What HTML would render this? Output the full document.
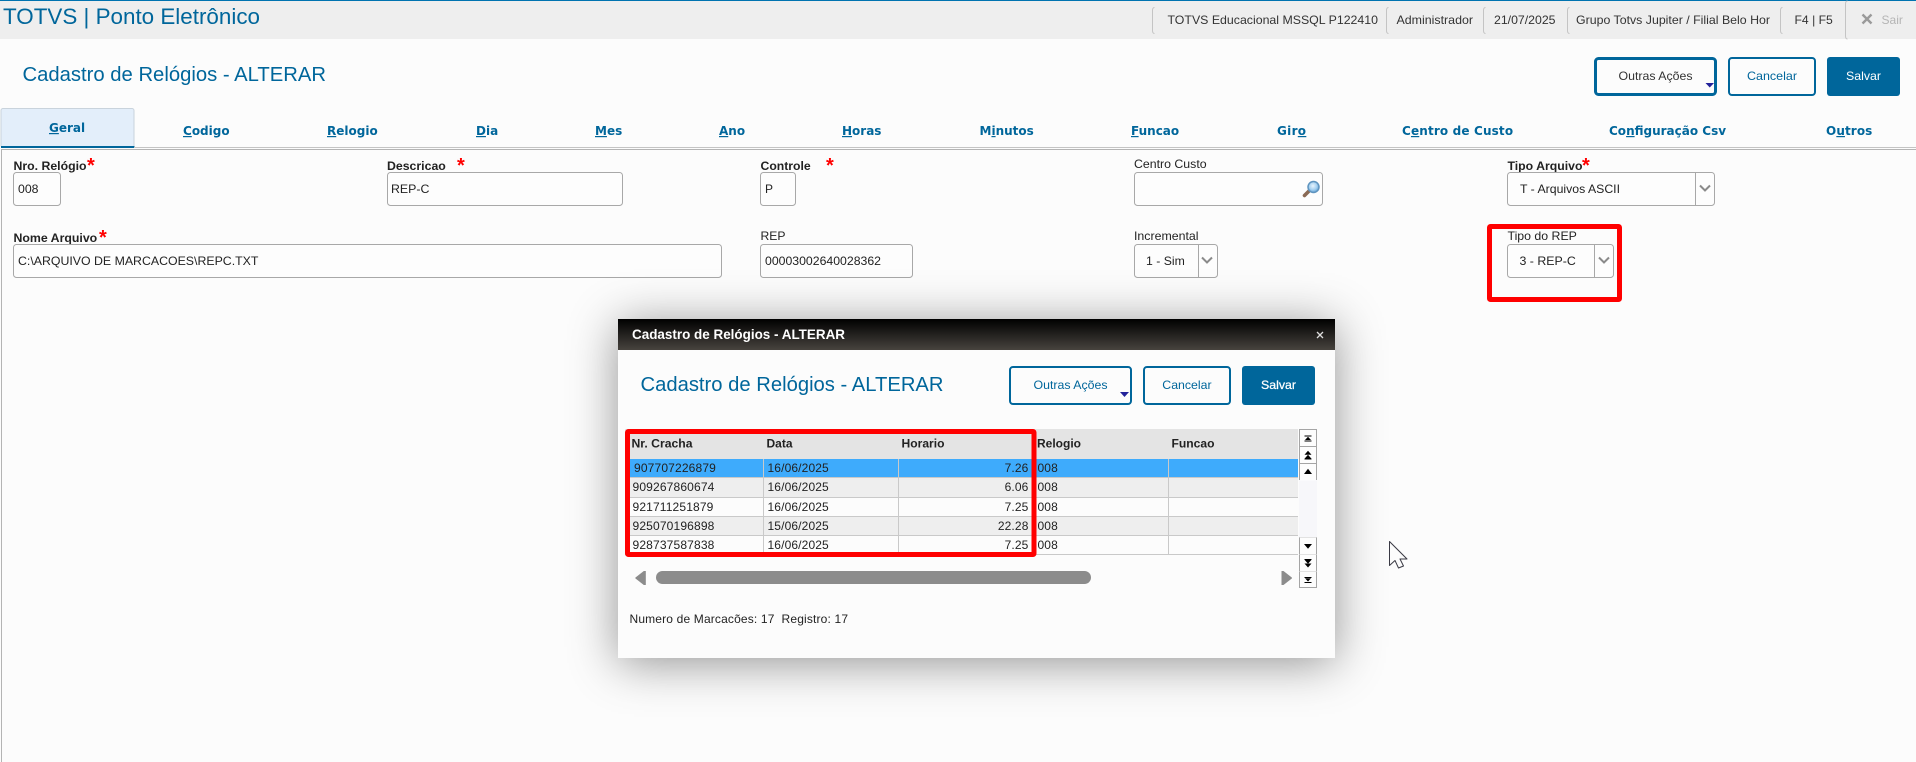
<!DOCTYPE html>
<html lang="pt-BR">
<head>
<meta charset="utf-8">
<title>TOTVS | Ponto Eletrônico</title>
<style>
html,body{margin:0;padding:0;width:1916px;height:762px;overflow:hidden;background:#fcfcfc;}
svg{position:absolute;left:0;top:0;}
svg text{font-family:"Liberation Sans",Arial,sans-serif;font-size:12px;fill:#222;}
.tab text{font-family:"DejaVu Sans",sans-serif;font-size:12px;font-weight:700;fill:#00669b;}
.b{font-weight:700;}
.in{fill:#fdfdfd;stroke:#a8a8a8;stroke-width:1;}
.ch{fill:none;stroke:#8a8a8a;stroke-width:2;}
.ast{font-size:20px!important;font-weight:700;fill:#f00!important;}
.top text{fill:#333;}
.sep{fill:none;stroke:#c4c4c4;stroke-width:1;}
.rows text{letter-spacing:.13px;}
#modal{position:absolute;left:618px;top:319px;width:717px;height:339px;background:#fcfcfc;box-shadow:0 5px 45px rgba(0,0,0,.42);}
</style>
</head>
<body>
<svg width="1916" height="762" viewBox="0 0 1916 762">
  <!-- top bar -->
  <rect x="0" y="0" width="1916" height="39" fill="#eee"/>
  <rect x="0" y="0" width="1916" height="1" fill="#0073b0"/>
  <text x="3" y="24" style="font-size:22.5px;fill:#00669b" textLength="257" lengthAdjust="spacingAndGlyphs">TOTVS | Ponto Eletrônico</text>
  <g class="top">
    <path class="sep" d="M1154.500 7.500q-2 0-2 3v20q0 3 2 3M1388.500 7.500q-2 0-2 3v20q0 3 2 3M1485.500 7.500q-2 0-2 3v20q0 3 2 3M1569.500 7.500q-2 0-2 3v20q0 3 2 3M1782.500 7.500q-2 0-2 3v20q0 3 2 3M1847.500 1q-2 0-2 3v32q0 3 2 3"/>
    <text x="1167.500" y="24" textLength="210.500" lengthAdjust="spacingAndGlyphs">TOTVS Educacional MSSQL P122410</text>
    <text x="1396.500" y="24" textLength="76.500" lengthAdjust="spacingAndGlyphs">Administrador</text>
    <text x="1494" y="24" textLength="61.500" lengthAdjust="spacingAndGlyphs">21/07/2025</text>
    <text x="1576" y="24" textLength="194" lengthAdjust="spacingAndGlyphs">Grupo Totvs Jupiter / Filial Belo Hor</text>
    <text x="1794.500" y="24" textLength="38.300" lengthAdjust="spacingAndGlyphs">F4 | F5</text>
    <path d="M1862.500 14.500l9 9m0-9l-9 9" stroke="#9a9a9a" stroke-width="2.400" fill="none"/>
    <text x="1881.500" y="24" style="fill:#b5b5b5" textLength="21.400" lengthAdjust="spacingAndGlyphs">Sair</text>
  </g>

  <!-- page header -->
  <text x="22.500" y="81" style="font-size:20px;fill:#00669b" textLength="303.500" lengthAdjust="spacingAndGlyphs">Cadastro de Relógios - ALTERAR</text>
  <rect x="1595.500" y="58.500" width="120" height="36" rx="3" fill="#fcfcfc" stroke="#00669b" stroke-width="3"/>
  <text x="1618.500" y="80" style="fill:#333" textLength="74" lengthAdjust="spacingAndGlyphs">Outras Ações</text>
  <path d="M1705.500 83h8.500l-4.250 4.500z" fill="#22229a"/>
  <rect x="1729" y="58" width="86" height="37" rx="3" fill="#fcfcfc" stroke="#00669b" stroke-width="2"/>
  <text x="1747" y="80" style="fill:#00669b" textLength="50" lengthAdjust="spacingAndGlyphs">Cancelar</text>
  <rect x="1827" y="57" width="73" height="39" rx="3" fill="#00669b"/>
  <text x="1846" y="80" style="fill:#fff" textLength="35" lengthAdjust="spacingAndGlyphs">Salvar</text>

  <!-- tabs -->
  <rect x="1" y="108.500" width="133" height="39" rx="2" fill="#e3eefa" stroke="#c9d3dc"/>
  <rect x="1" y="146" width="133.500" height="2" fill="#00669b"/>
  <rect x="134" y="147" width="1782" height="1" fill="#c4c4c4"/>
  <rect x="1" y="149" width="1915" height="1" fill="#b4b4b4"/>
  <rect x="1" y="149" width="1" height="613" fill="#b4b4b4"/>
  <g class="tab">
    <text x="49" y="132"><tspan text-decoration="underline">G</tspan>eral</text>
    <text x="183" y="135"><tspan text-decoration="underline">C</tspan>odigo</text>
    <text x="327" y="135"><tspan text-decoration="underline">R</tspan>elogio</text>
    <text x="476" y="135"><tspan text-decoration="underline">D</tspan>ia</text>
    <text x="595" y="135"><tspan text-decoration="underline">M</tspan>es</text>
    <text x="719" y="135"><tspan text-decoration="underline">A</tspan>no</text>
    <text x="842" y="135"><tspan text-decoration="underline">H</tspan>oras</text>
    <text x="979.500" y="135">M<tspan text-decoration="underline">i</tspan>nutos</text>
    <text x="1131" y="135"><tspan text-decoration="underline">F</tspan>uncao</text>
    <text x="1277" y="135" style="letter-spacing:.3px">Gir<tspan text-decoration="underline">o</tspan></text>
    <text x="1402" y="135" style="letter-spacing:.15px">C<tspan text-decoration="underline">e</tspan>ntro de Custo</text>
    <text x="1609" y="135">Co<tspan text-decoration="underline">n</tspan>figuração Csv</text>
    <text x="1826" y="135" style="letter-spacing:.1px">O<tspan text-decoration="underline">u</tspan>tros</text>
  </g>

  <!-- form row 1 -->
  <text class="b" x="13.500" y="170" textLength="73" lengthAdjust="spacingAndGlyphs">Nro. Relógio</text>
  <text class="ast" x="87" y="172">*</text>
  <rect class="in" x="13.500" y="172.500" width="47" height="33" rx="3"/>
  <text x="18" y="193" textLength="20.500" lengthAdjust="spacingAndGlyphs">008</text>

  <text class="b" x="387" y="170" textLength="58.800" lengthAdjust="spacingAndGlyphs">Descricao</text>
  <text class="ast" x="457" y="172">*</text>
  <rect class="in" x="387.500" y="172.500" width="235" height="33" rx="3"/>
  <text x="391" y="193" textLength="38.400" lengthAdjust="spacingAndGlyphs">REP-C</text>

  <text class="b" x="760.500" y="170" textLength="50.200" lengthAdjust="spacingAndGlyphs">Controle</text>
  <text class="ast" x="826" y="172">*</text>
  <rect class="in" x="760.500" y="172.500" width="35" height="33" rx="3"/>
  <text x="765" y="193">P</text>

  <text x="1134" y="168" textLength="72.600" lengthAdjust="spacingAndGlyphs">Centro Custo</text>
  <rect class="in" x="1134.500" y="172.500" width="188" height="33" rx="3"/>
  <defs>
    <radialGradient id="lens" cx="45%" cy="40%" r="60%"><stop offset="0" stop-color="#e8f4fd"/><stop offset=".6" stop-color="#a5d0f0"/><stop offset="1" stop-color="#5f9fd3"/></radialGradient>
  </defs>
  <path d="M1304.500 195.500l6-6" stroke="#8a6a55" stroke-width="3.600" stroke-linecap="round"/>
  <circle cx="1313.500" cy="187" r="5.500" fill="url(#lens)" stroke="#5f94bf" stroke-width="1.500"/>

  <text class="b" x="1507.500" y="170" textLength="75" lengthAdjust="spacingAndGlyphs">Tipo Arquivo</text>
  <text class="ast" x="1582" y="172">*</text>
  <rect class="in" x="1507.500" y="172.500" width="207" height="33" rx="3"/>
  <rect x="1695" y="173" width="1" height="32" fill="#a8a8a8"/>
  <path class="ch" d="M1700 185.500l5 5 5-5"/>
  <text x="1520" y="193" textLength="100" lengthAdjust="spacingAndGlyphs">T - Arquivos ASCII</text>

  <!-- form row 2 -->
  <text class="b" x="13.500" y="242" textLength="83.700" lengthAdjust="spacingAndGlyphs">Nome Arquivo</text>
  <text class="ast" x="99" y="244">*</text>
  <rect class="in" x="13.500" y="244.500" width="708" height="33" rx="3"/>
  <text x="18" y="265" textLength="240.400" lengthAdjust="spacingAndGlyphs">C:\ARQUIVO DE MARCACOES\REPC.TXT</text>

  <text x="760.500" y="240" textLength="25" lengthAdjust="spacingAndGlyphs">REP</text>
  <rect class="in" x="760.500" y="244.500" width="152" height="33" rx="3"/>
  <text x="765" y="265" textLength="116" lengthAdjust="spacingAndGlyphs">00003002640028362</text>

  <text x="1134" y="240" textLength="64.500" lengthAdjust="spacingAndGlyphs">Incremental</text>
  <rect class="in" x="1134.500" y="244.500" width="83" height="33" rx="3"/>
  <rect x="1198" y="245" width="1" height="32" fill="#a8a8a8"/>
  <path class="ch" d="M1202 257.500l5 5 5-5"/>
  <text x="1146" y="265" textLength="38.800" lengthAdjust="spacingAndGlyphs">1 - Sim</text>

  <text x="1507.500" y="240" textLength="69.400" lengthAdjust="spacingAndGlyphs">Tipo do REP</text>
  <rect class="in" x="1507.500" y="244.500" width="106" height="33" rx="3"/>
  <rect x="1594" y="245" width="1" height="32" fill="#a8a8a8"/>
  <path class="ch" d="M1599 257.500l5 5 5-5"/>
  <text x="1519.500" y="265" textLength="56.300" lengthAdjust="spacingAndGlyphs">3 - REP-C</text>

  <rect x="1489.500" y="226.500" width="130" height="73" rx="1" fill="none" stroke="#f00" stroke-width="5"/>
</svg>

<div id="modal"></div>

<svg width="1916" height="762" viewBox="0 0 1916 762">
  <defs>
    <linearGradient id="hd" x1="0" y1="0" x2="0" y2="1"><stop offset="0" stop-color="#000"/><stop offset="1" stop-color="#47433e"/></linearGradient>
  </defs>
  <rect x="618" y="319" width="717" height="31" fill="url(#hd)"/>
  <text x="632" y="339" class="b" style="font-size:14px;fill:#fff" textLength="213" lengthAdjust="spacingAndGlyphs">Cadastro de Relógios - ALTERAR</text>
  <path d="M1317 332l6 6m0-6l-6 6" stroke="#ddd" stroke-width="1.300" fill="none"/>

  <text x="640.500" y="391" style="font-size:20px;fill:#00669b" textLength="303" lengthAdjust="spacingAndGlyphs">Cadastro de Relógios - ALTERAR</text>

  <rect x="1010" y="367" width="121" height="37" rx="3" fill="#fcfcfc" stroke="#00669b" stroke-width="2"/>
  <text x="1033.500" y="389" style="fill:#00669b" textLength="74" lengthAdjust="spacingAndGlyphs">Outras Ações</text>
  <path d="M1120 392h9l-4.500 5z" fill="#22229a"/>
  <rect x="1144" y="367" width="86" height="37" rx="3" fill="#fcfcfc" stroke="#00669b" stroke-width="2"/>
  <text x="1162.300" y="389" style="fill:#00669b" textLength="49.300" lengthAdjust="spacingAndGlyphs">Cancelar</text>
  <rect x="1242" y="366" width="73" height="39" rx="3" fill="#00669b"/>
  <text x="1261" y="389" style="fill:#fff;stroke:#fff;stroke-width:.25px" textLength="35" lengthAdjust="spacingAndGlyphs">Salvar</text>

  <!-- table -->
  <rect x="625" y="429" width="673" height="30" fill="#e4e4e4"/>
  <rect x="625" y="459" width="673" height="18" fill="#3eabfc"/>
  <rect x="625" y="478" width="673" height="19" fill="#eee"/>
  <rect x="625" y="498" width="673" height="18" fill="#fcfcfc"/>
  <rect x="625" y="517" width="673" height="18" fill="#eee"/>
  <rect x="625" y="536" width="673" height="18" fill="#fcfcfc"/>
  <g fill="#c9c9c9">
    <rect x="625" y="477" width="673" height="1"/>
    <rect x="625" y="497" width="673" height="1"/>
    <rect x="625" y="516" width="673" height="1"/>
    <rect x="625" y="535" width="673" height="1"/>
    <rect x="625" y="554" width="673" height="1"/>
    <rect x="763" y="459" width="1" height="96"/>
    <rect x="898" y="459" width="1" height="96"/>
    <rect x="1035" y="459" width="1" height="96"/>
    <rect x="1168" y="459" width="1" height="96"/>
  </g>
  <g>
    <text class="b" x="631.500" y="447.500" textLength="61" lengthAdjust="spacingAndGlyphs">Nr. Cracha</text>
    <text class="b" x="766.500" y="447.500" textLength="26" lengthAdjust="spacingAndGlyphs">Data</text>
    <text class="b" x="901.500" y="447.500" textLength="43" lengthAdjust="spacingAndGlyphs">Horario</text>
    <text class="b" x="1037" y="447.500" textLength="44" lengthAdjust="spacingAndGlyphs">Relogio</text>
    <text class="b" x="1171.500" y="447.500" textLength="43" lengthAdjust="spacingAndGlyphs">Funcao</text>
  </g>
  <g class="rows">
    <text x="634" y="472" textLength="82" lengthAdjust="spacingAndGlyphs">907707226879</text><text x="767.500" y="472">16/06/2025</text><text x="1028.500" y="472" text-anchor="end">7.26</text><text x="1037.500" y="472">008</text>
    <text x="632.500" y="491" textLength="82" lengthAdjust="spacingAndGlyphs">909267860674</text><text x="767.500" y="491">16/06/2025</text><text x="1028.500" y="491" text-anchor="end">6.06</text><text x="1037.500" y="491">008</text>
    <text x="632.500" y="511" textLength="81" lengthAdjust="spacingAndGlyphs">921711251879</text><text x="767.500" y="511">16/06/2025</text><text x="1028.500" y="511" text-anchor="end">7.25</text><text x="1037.500" y="511">008</text>
    <text x="632.500" y="530" textLength="82" lengthAdjust="spacingAndGlyphs">925070196898</text><text x="767.500" y="530">15/06/2025</text><text x="1028.500" y="530" text-anchor="end">22.28</text><text x="1037.500" y="530">008</text>
    <text x="632.500" y="549" textLength="82" lengthAdjust="spacingAndGlyphs">928737587838</text><text x="767.500" y="549">16/06/2025</text><text x="1028.500" y="549" text-anchor="end">7.25</text><text x="1037.500" y="549">008</text>
  </g>
  <rect x="627.500" y="431.500" width="406.500" height="123" rx="1" fill="none" stroke="#f00" stroke-width="5"/>

  <!-- vertical scrollbar -->
  <rect x="1299" y="480" width="18" height="57" fill="#f7f7fa"/>
  <rect x="1299.500" y="429.500" width="17" height="51" fill="#fdfdfd"/>
  <path d="M1299.500 480v-50.500h17v50.500M1299.500 446.500h17M1299.500 463.500h17" fill="none" stroke="#a5a5a5"/>
  <rect x="1299.500" y="537.500" width="17" height="50" fill="#fdfdfd"/>
  <path d="M1299.500 537v50.500h17v-50.500" fill="none" stroke="#a5a5a5"/>
  <path d="M1299.500 537.500h17M1299.500 554.500h17M1299.500 571.500h17" fill="none" stroke="#e2e2e2"/>
  <g fill="#000">
    <rect x="1304.500" y="435.500" width="7" height="1"/><path d="M1308 436.700l3 3.300h-6z"/><rect x="1304.500" y="440.500" width="7" height="1"/>
    <path d="M1308 450.700l3.500 4h-7z"/><path d="M1308 454.700l3.500 4h-7z"/><rect x="1304.500" y="458.500" width="7" height="1"/>
    <path d="M1308 468.700l4 5.300h-8z"/>
    <path d="M1304 544h8l-4 4.700z"/>
    <rect x="1304.500" y="559" width="7" height="1"/><path d="M1304.500 559.800h7l-3.500 4z"/><path d="M1304.500 563.500h7l-3.500 4z"/>
    <rect x="1304.500" y="577" width="7" height="1"/><path d="M1305 578.200h6l-3 3.300z"/><rect x="1304.500" y="582" width="7" height="1"/>
  </g>

  <!-- horizontal scrollbar -->
  <path d="M645.800 571v14h-2l-8.300-6.500q-.5-.5 0-1l8.300-6.500z" fill="#8c8c8c"/>
  <rect x="656" y="571" width="435" height="13" rx="6.500" fill="#8c8c8c"/>
  <path d="M1281.500 571v14h2l8.300-6.500q.5-.5 0-1l-8.300-6.500z" fill="#8c8c8c"/>

  <text x="629.500" y="623" xml:space="preserve" textLength="218.500" lengthAdjust="spacing">Numero de Marcacões: 17  Registro: 17</text>

  <!-- mouse cursor -->
  <path d="M1389.500 541.500v24l5.500-5 3.500 7.500 5-2-3.500-7h7z" fill="#fcfcfc" stroke="#3a3a44" stroke-width="1" stroke-linejoin="round"/>
</svg>
</body>
</html>
